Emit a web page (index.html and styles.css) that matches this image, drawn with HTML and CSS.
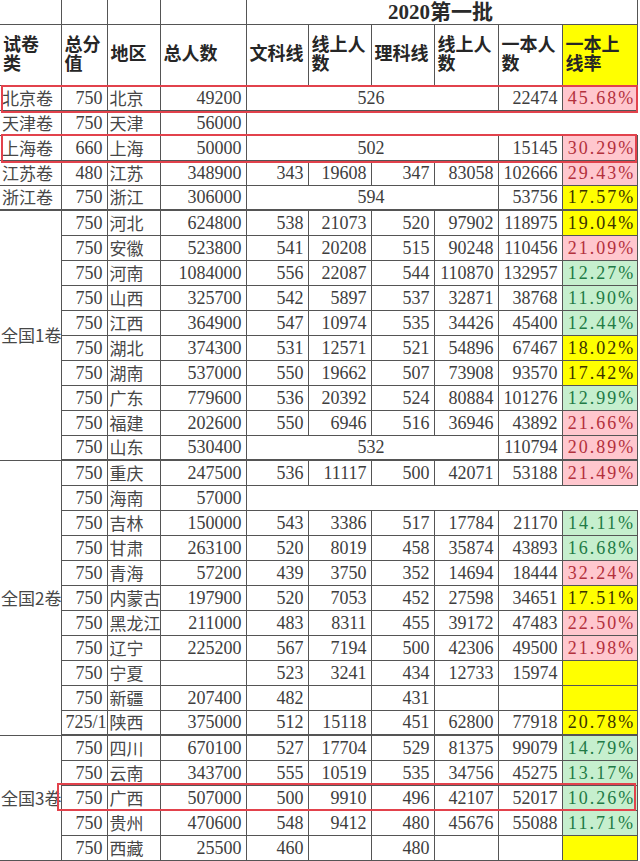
FILE: index.html
```html
<!DOCTYPE html>
<html lang="zh-CN">
<head>
<meta charset="utf-8">
<title>2020第一批</title>
<link rel="stylesheet" href="styles.css">
</head>
<body>
<div class="wrap">
<table class="sheet">
<colgroup>
<col class="c0"><col class="c1"><col class="c2"><col class="c3"><col class="c4"><col class="c5"><col class="c6"><col class="c7"><col class="c8"><col class="c9">
</colgroup>
<tr class="hr1">
<td></td><td></td><td></td><td></td>
<td colspan="6" class="title">2020第一批</td>
</tr>
<tr class="hr2">
<td class="th">试卷<br>类</td>
<td class="th">总分<br>值</td>
<td class="th">地区</td>
<td class="th">总人数</td>
<td class="th">文科线</td>
<td class="th">线上人<br>数</td>
<td class="th">理科线</td>
<td class="th">线上人<br>数</td>
<td class="th">一本人<br>数</td>
<td class="th yhead">一本上<br>线率</td>
</tr>
<tr><td class="t">北京卷</td><td class="n">750</td><td class="t">北京</td><td class="n">49200</td><td colspan="4" class="m">526</td><td class="n">22474</td><td class="p pink">45.68%</td></tr>
<tr><td class="t">天津卷</td><td class="n">750</td><td class="t">天津</td><td class="n">56000</td><td colspan="6" class="blank"></td></tr>
<tr><td class="t">上海卷</td><td class="n">660</td><td class="t">上海</td><td class="n">50000</td><td colspan="4" class="m">502</td><td class="n">15145</td><td class="p pink">30.29%</td></tr>
<tr><td class="t">江苏卷</td><td class="n">480</td><td class="t">江苏</td><td class="n">348900</td><td class="n">343</td><td class="n">19608</td><td class="n">347</td><td class="n">83058</td><td class="n">102666</td><td class="p pink">29.43%</td></tr>
<tr class="thick"><td class="t">浙江卷</td><td class="n">750</td><td class="t">浙江</td><td class="n">306000</td><td colspan="4" class="m">594</td><td class="n">53756</td><td class="p yel">17.57%</td></tr>

<tr><td rowspan="10" class="t grp">全国1卷</td><td class="n">750</td><td class="t">河北</td><td class="n">624800</td><td class="n">538</td><td class="n">21073</td><td class="n">520</td><td class="n">97902</td><td class="n">118975</td><td class="p yel">19.04%</td></tr>
<tr><td class="n">750</td><td class="t">安徽</td><td class="n">523800</td><td class="n">541</td><td class="n">20208</td><td class="n">515</td><td class="n">90248</td><td class="n">110456</td><td class="p pink">21.09%</td></tr>
<tr><td class="n">750</td><td class="t">河南</td><td class="n">1084000</td><td class="n">556</td><td class="n">22087</td><td class="n">544</td><td class="n">110870</td><td class="n">132957</td><td class="p green">12.27%</td></tr>
<tr><td class="n">750</td><td class="t">山西</td><td class="n">325700</td><td class="n">542</td><td class="n">5897</td><td class="n">537</td><td class="n">32871</td><td class="n">38768</td><td class="p green">11.90%</td></tr>
<tr><td class="n">750</td><td class="t">江西</td><td class="n">364900</td><td class="n">547</td><td class="n">10974</td><td class="n">535</td><td class="n">34426</td><td class="n">45400</td><td class="p green">12.44%</td></tr>
<tr><td class="n">750</td><td class="t">湖北</td><td class="n">374300</td><td class="n">531</td><td class="n">12571</td><td class="n">521</td><td class="n">54896</td><td class="n">67467</td><td class="p yel">18.02%</td></tr>
<tr><td class="n">750</td><td class="t">湖南</td><td class="n">537000</td><td class="n">550</td><td class="n">19662</td><td class="n">507</td><td class="n">73908</td><td class="n">93570</td><td class="p yel">17.42%</td></tr>
<tr><td class="n">750</td><td class="t">广东</td><td class="n">779600</td><td class="n">536</td><td class="n">20392</td><td class="n">524</td><td class="n">80884</td><td class="n">101276</td><td class="p green">12.99%</td></tr>
<tr><td class="n">750</td><td class="t">福建</td><td class="n">202600</td><td class="n">550</td><td class="n">6946</td><td class="n">516</td><td class="n">36946</td><td class="n">43892</td><td class="p pink">21.66%</td></tr>
<tr class="thick"><td class="n">750</td><td class="t">山东</td><td class="n">530400</td><td colspan="4" class="m">532</td><td class="n">110794</td><td class="p pink">20.89%</td></tr>

<tr><td rowspan="11" class="t grp">全国2卷</td><td class="n">750</td><td class="t">重庆</td><td class="n">247500</td><td class="n">536</td><td class="n">11117</td><td class="n">500</td><td class="n">42071</td><td class="n">53188</td><td class="p pink">21.49%</td></tr>
<tr><td class="n">750</td><td class="t">海南</td><td class="n">57000</td><td colspan="6" class="blank"></td></tr>
<tr><td class="n">750</td><td class="t">吉林</td><td class="n">150000</td><td class="n">543</td><td class="n">3386</td><td class="n">517</td><td class="n">17784</td><td class="n">21170</td><td class="p green">14.11%</td></tr>
<tr><td class="n">750</td><td class="t">甘肃</td><td class="n">263100</td><td class="n">520</td><td class="n">8019</td><td class="n">458</td><td class="n">35874</td><td class="n">43893</td><td class="p green">16.68%</td></tr>
<tr><td class="n">750</td><td class="t">青海</td><td class="n">57200</td><td class="n">439</td><td class="n">3750</td><td class="n">352</td><td class="n">14694</td><td class="n">18444</td><td class="p pink">32.24%</td></tr>
<tr><td class="n">750</td><td class="t">内蒙古</td><td class="n">197900</td><td class="n">520</td><td class="n">7053</td><td class="n">452</td><td class="n">27598</td><td class="n">34651</td><td class="p yel">17.51%</td></tr>
<tr><td class="n">750</td><td class="t">黑龙江</td><td class="n">211000</td><td class="n">483</td><td class="n">8311</td><td class="n">455</td><td class="n">39172</td><td class="n">47483</td><td class="p pink">22.50%</td></tr>
<tr><td class="n">750</td><td class="t">辽宁</td><td class="n">225200</td><td class="n">567</td><td class="n">7194</td><td class="n">500</td><td class="n">42306</td><td class="n">49500</td><td class="p pink">21.98%</td></tr>
<tr><td class="n">750</td><td class="t">宁夏</td><td class="n"></td><td class="n">523</td><td class="n">3241</td><td class="n">434</td><td class="n">12733</td><td class="n">15974</td><td class="p yel"></td></tr>
<tr><td class="n">750</td><td class="t">新疆</td><td class="n">207400</td><td class="n">482</td><td class="n"></td><td class="n">431</td><td class="n"></td><td class="n"></td><td class="p yel"></td></tr>
<tr class="thick"><td class="n left">725/1</td><td class="t">陕西</td><td class="n">375000</td><td class="n">512</td><td class="n">15118</td><td class="n">451</td><td class="n">62800</td><td class="n">77918</td><td class="p yel">20.78%</td></tr>

<tr><td rowspan="5" class="t grp">全国3卷</td><td class="n">750</td><td class="t">四川</td><td class="n">670100</td><td class="n">527</td><td class="n">17704</td><td class="n">529</td><td class="n">81375</td><td class="n">99079</td><td class="p green">14.79%</td></tr>
<tr><td class="n">750</td><td class="t">云南</td><td class="n">343700</td><td class="n">555</td><td class="n">10519</td><td class="n">535</td><td class="n">34756</td><td class="n">45275</td><td class="p green">13.17%</td></tr>
<tr><td class="n">750</td><td class="t">广西</td><td class="n">507000</td><td class="n">500</td><td class="n">9910</td><td class="n">496</td><td class="n">42107</td><td class="n">52017</td><td class="p green">10.26%</td></tr>
<tr><td class="n">750</td><td class="t">贵州</td><td class="n">470600</td><td class="n">548</td><td class="n">9412</td><td class="n">480</td><td class="n">45676</td><td class="n">55088</td><td class="p green">11.71%</td></tr>
<tr><td class="n">750</td><td class="t">西藏</td><td class="n">25500</td><td class="n">460</td><td class="n"></td><td class="n">480</td><td class="n"></td><td class="n"></td><td class="p yel"></td></tr>
</table>
<div class="mark mark-bj"></div>
<div class="mark mark-sh"></div>
<div class="mark mark-gx"></div>
</div>
</body>
</html>
```
FILE: styles.css
```css
html, body {
  margin: 0;
  padding: 0;
  background: #ffffff;
}

.wrap {
  position: relative;
  width: 640px;
  height: 861px;
  overflow: hidden;
  background: #ffffff;
}

.sheet {
  border-collapse: collapse;
  table-layout: fixed;
  width: 637px;
  background: #ffffff;
  border-left: hidden;
  border-top: hidden;
  font-family: "Liberation Serif", "Noto Sans CJK SC", serif;
  font-size: 18px;
  color: #3d3d3d;
}

.c0 { width: 61px; }
.c1 { width: 46px; }
.c2 { width: 53px; }
.c3 { width: 86px; }
.c4 { width: 62px; }
.c5 { width: 63px; }
.c6 { width: 63px; }
.c7 { width: 64px; }
.c8 { width: 64px; }
.c9 { width: 75px; }

.sheet td {
  border: 1px solid #555555;
  padding: 0 4px 0 2px;
  white-space: nowrap;
  overflow: hidden;
  line-height: 22px;
  vertical-align: middle;
}

.sheet tr { height: 25px; }
.sheet tr.hr1 { height: 24px; }
.sheet tr.hr2 { height: 61px; }
.sheet tr.thick td { border-bottom: 2px solid #555555; }

.title {
  text-align: center;
  font-weight: bold;
  font-size: 21px;
  color: #2a2a2a;
}

.th {
  font-weight: bold;
  line-height: 19px !important;
  color: #262626;
  text-align: left;
  padding-left: 3px !important;
}

.yhead { background: #ffff00; }

.t {
  text-align: left;
  font-family: "Noto Sans CJK SC", sans-serif;
  font-size: 17px;
  color: #474747;
}

.grp { padding-left: 1px !important; }

.n { text-align: right; }
.n.left { text-align: left; padding-left: 4px !important; padding-right: 0 !important; }

.m { text-align: center; }

.p {
  text-align: center;
  letter-spacing: 2px;
  padding: 0 0 0 4px !important;
}

.pink { background: #ffc7ce; color: #b3303c; }
.green { background: #c6efce; color: #217a45; }
.yel { background: #ffff00; color: #3a3200; }

.blank {
  border-right: hidden !important;
  background: #ffffff;
}

.mark {
  position: absolute;
  box-sizing: border-box;
  border: 2px solid #e2424c;
}

.mark-bj { left: 1px; top: 85px; width: 637px; height: 28px; }
.mark-sh { left: 1px; top: 134px; width: 636px; height: 29px; }
.mark-gx { left: 57px; top: 783px; width: 579px; height: 28px; }
```
